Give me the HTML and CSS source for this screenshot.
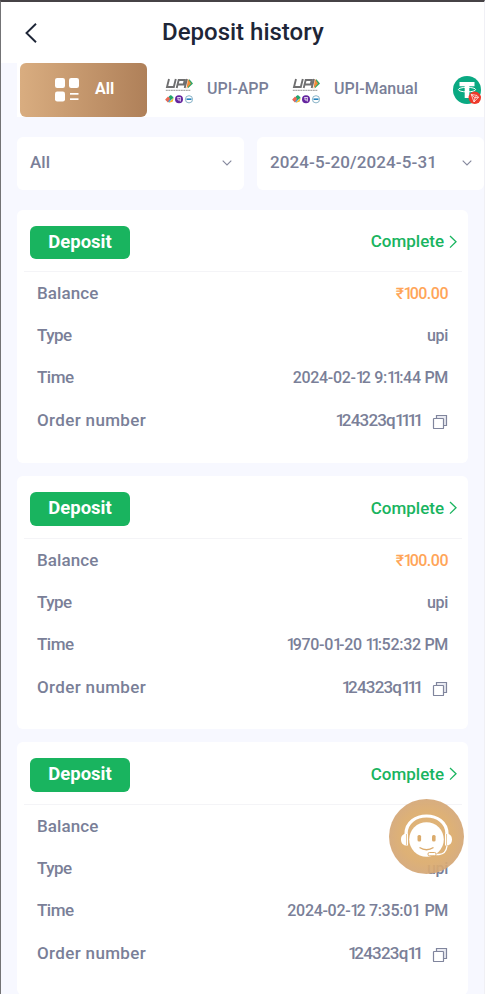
FILE: index.html
```html
<!DOCTYPE html>
<html lang="en">
<head>
<meta charset="utf-8">
<title>Deposit history</title>
<link rel="stylesheet" href="styles.css">
</head>
<body>
<svg class="defs" width="0" height="0">
  <symbol id="upi" viewBox="0 0 28 28">
    <g fill="none" stroke="#6f6f70" stroke-width="1.9">
      <path d="M4 3 2 11H8.800L10.800 3M11.700 12 13.700 4H19.700L18.700 8.500H13.200M22 3 19.700 12"/>
    </g>
    <path d="M24.200 3 28 7.500 22.700 12.500Z" fill="#31a768"/>
    <path d="M23 3 26 7.500 21.500 12.500Z" fill="#f18a38"/>
    <path d="M.8 14.300H25.500" stroke="#aaa" stroke-width="1.200" stroke-dasharray="2 .5"/>
    <g transform="translate(0 2)">
      <path d="M.5 22 5 17.500 8.500 19 4 24.500Z" fill="#369fe5"/>
      <path d="M4 18.500 6 17 8.700 20 5 22Z" fill="#25a765"/>
      <path d="M.2 21.500 3 18.500 5 20.500 2.800 24.500Z" fill="#ef6950"/>
      <path d="M3.500 25 8.600 20 7.800 23.500Z" fill="#f6b820"/>
      <circle cx="14" cy="21.300" r="4" fill="#65259f"/>
      <path d="M12.200 19.500h3.500M13 20v2h2.400M15.300 19.500v4" stroke="#fff" stroke-width=".8" fill="none"/>
      <circle cx="24" cy="21.300" r="3.600" fill="#fff" stroke="#6ba0b9" stroke-width=".8"/>
      <path d="M21.500 21.200h5" stroke="#2482bd" stroke-width="1.600"/>
    </g>
  </symbol>
  <symbol id="copy" viewBox="0 0 16 16">
    <path d="M4.500 4V1.500H14.500V11.500H12" fill="#e9eaf1" stroke="#80859d" stroke-width="1.200"/>
    <rect x="1.500" y="4.500" width="10" height="10" rx=".6" fill="#fff" stroke="#80859d" stroke-width="1.200"/>
  </symbol>
  <symbol id="down" viewBox="0 0 10 6"><path d="M.7.7 5 5 9.300.7" fill="none" stroke="#85889d" stroke-width="1.100"/></symbol>
  <symbol id="next" viewBox="0 0 8 14"><path d="M1 1 7 6.800 1 12.600" fill="none" stroke="#19b45f" stroke-width="1.300"/></symbol>
</svg>
<div class="page">
  <header class="header">
    <svg class="back" viewBox="0 0 12 20"><path d="M11 .8 1.500 10 11 19.200" fill="none" stroke="#1e2637" stroke-width="1.900"/></svg>
    <h1>Deposit history</h1>
  </header>
  <nav class="tabs">
    <div class="tab active">
      <svg class="grid" viewBox="0 0 24 24"><g fill="#fff"><rect width="10" height="10" rx="2.200"/><rect x="14" width="10" height="10" rx="2.200"/><rect y="13.500" width="10" height="10" rx="2.200"/><rect x="15" y="15" width="8.500" height="1.700"/><rect x="15" y="20.300" width="8.500" height="1.700"/></g></svg>
      <span>All</span>
    </div>
    <div class="tab app"><svg class="upi"><use href="#upi"/></svg><span>UPI-APP</span></div>
    <div class="tab manual"><svg class="upi"><use href="#upi"/></svg><span>UPI-Manual</span></div>
    <div class="tab coin">
      <svg viewBox="0 0 28 28"><circle cx="14" cy="14" r="14" fill="#0aa982"/><path d="M6.500 6H21.500V10.300H16.300V22H11.700V10.300H6.500Z" fill="#fff"/><ellipse cx="14" cy="13.600" rx="8.600" ry="2.300" fill="none" stroke="#fff" stroke-width="1"/><circle cx="21.800" cy="21.800" r="6.200" fill="#ee3a2b"/><path d="M18.200 18.400 23.600 19.400 25.600 21.200 21 26ZM18.200 18.400 22 21.800 25.600 21.200M22 21.800 21 26M22 21.800 23.600 19.400" fill="none" stroke="#fff" stroke-width=".7"/></svg>
    </div>
  </nav>
  <div class="filters">
    <div class="filter"><span>All</span><svg class="down"><use href="#down"/></svg></div>
    <div class="filter date"><span>2024-5-20/2024-5-31</span><svg class="down"><use href="#down"/></svg></div>
  </div>
  <main class="list">
    <section class="card">
      <div class="top"><b class="badge">Deposit</b><span class="status">Complete</span><svg class="next"><use href="#next"/></svg></div>
      <div class="row"><span class="label">Balance</span><span class="amount">₹<i>1</i>00.00</span></div>
      <div class="row"><span class="label short">Type</span><span class="value">upi</span></div>
      <div class="row"><span class="label short">Time</span><span class="value">2024-02-<i>1</i>2 9:<i>11</i>:44 PM</span></div>
      <div class="row"><span class="label long">Order number</span><span class="order"><i>1</i>24323q<i>1111</i></span><svg class="copy"><use href="#copy"/></svg></div>
    </section>
    <section class="card">
      <div class="top"><b class="badge">Deposit</b><span class="status">Complete</span><svg class="next"><use href="#next"/></svg></div>
      <div class="row"><span class="label">Balance</span><span class="amount">₹<i>1</i>00.00</span></div>
      <div class="row"><span class="label short">Type</span><span class="value">upi</span></div>
      <div class="row"><span class="label short">Time</span><span class="value"><i>1</i>970-0<i>1</i>-20 <i>11</i>:52:32 PM</span></div>
      <div class="row"><span class="label long">Order number</span><span class="order"><i>1</i>24323q<i>111</i></span><svg class="copy"><use href="#copy"/></svg></div>
    </section>
    <section class="card">
      <div class="top"><b class="badge">Deposit</b><span class="status">Complete</span><svg class="next"><use href="#next"/></svg></div>
      <div class="row"><span class="label">Balance</span></div>
      <div class="row"><span class="label short">Type</span><span class="value">upi</span></div>
      <div class="row"><span class="label short">Time</span><span class="value">2024-02-<i>1</i>2 7:35:01 PM</span></div>
      <div class="row"><span class="label long">Order number</span><span class="order"><i>1</i>24323q<i>11</i></span><svg class="copy"><use href="#copy"/></svg></div>
    </section>
  </main>
  <svg class="support" viewBox="0 0 75 75">
    <defs><radialGradient id="gold"><stop offset="0" stop-color="#dfb06f"/><stop offset=".7" stop-color="#dbab6c"/><stop offset="1" stop-color="#d4a777"/></radialGradient></defs>
    <circle cx="37.500" cy="37.500" r="37.500" fill="url(#gold)" opacity=".93"/>
    <path d="M17 35C17 11 58 11 58 35" fill="none" stroke="#fff" stroke-width="3.200"/>
    <circle cx="37.500" cy="40.500" r="17.300" fill="#fff"/>
    <path d="M19 34.500V46.500C14.500 47 12 44.500 12 40.500S14.500 34 19 34.500ZM56 34.500V46.500C60.500 47 63 44.500 63 40.500S60.500 34 56 34.500Z" fill="#fff"/>
    <path d="M17.500 35V46M57.500 35V46" stroke="#dfb375" stroke-width=".7"/>
    <rect x="28.500" y="36" width="3.600" height="6.500" rx="1.500" fill="#dbab6c"/><rect x="43" y="36" width="3.600" height="6.500" rx="1.500" fill="#dbab6c"/>
    <path d="M30.500 48.500Q37.500 53 44.500 48.500" fill="none" stroke="#dbab6c" stroke-width="1.400"/>
    <path d="M58 47Q57 55 50 55.500H46" fill="none" stroke="#fff" stroke-width="1.300"/>
    <rect x="39" y="53.500" width="8" height="3.300" rx="1.400" fill="#fff" stroke="#dbab6c" stroke-width="1"/>
  </svg>
</div>
</body>
</html>
```

FILE: styles.css
```css
* { box-sizing: border-box; }
body { margin: 0; overflow: hidden; background: #f7f8ff; }
.defs { position: absolute; }
.page {
  position: relative;
  height: 994px;
  overflow: hidden;
  border-top: 2px solid #464346;
  border-left: 1px solid #737375;
  border-right: 1px solid #f0f0f5;
  background: #f7f8ff;
  color: #7a7f98;
  font: 500 17px/24px Roboto, "Liberation Sans", sans-serif;
  white-space: nowrap;
}
/* narrow figure one */
i { font-style: normal; letter-spacing: -3px; }
.header { display: flex; align-items: center; height: 61px; padding-left: 24px; background: #fff; }
.back { width: 12px; height: 20px; }
h1 { margin: 0 0 2px 125px; color: #1e2637; font-size: 24px; font-weight: 500; letter-spacing: 0; }
.tabs { display: flex; height: 54px; margin-left: 16px; padding-left: 3px; background: #fff; }
.tab { display: flex; align-items: center; font-size: 16px; }
.tab span { margin-bottom: 2px; }
.tab.active { width: 127px; padding-left: 35px; gap: 16px; border-radius: 6px; background: linear-gradient(90deg, #d9ad80, #af8059); color: #fff; font-weight: 700; }
.grid { width: 24px; height: 24px; }
.app { width: 127px; padding-left: 18px; gap: 14px; }
.manual { width: 161px; padding-left: 18px; gap: 14px; }
.upi { width: 28px; height: 28px; }
.coin svg { width: 28px; height: 28px; margin-left: 18px; }
.filters { display: flex; gap: 13px; margin: 20px 0 0 16px; }
.filter { display: flex; align-items: center; justify-content: space-between; flex: none; width: 227px; height: 53px; padding: 0 12px 2px 13px; border-radius: 6px; background: #fff; }
.filter span { margin-bottom: 2px; letter-spacing: .1px; }
.down { width: 10px; height: 6px; }
.list { display: flex; flex-direction: column; gap: 13px; margin: 20px 16px 0; }
.card { flex: none; height: 253px; border-radius: 6px; background: #fff; }
.top { display: flex; align-items: center; height: 62px; margin: 0 6px 1px 7px; padding: 4px 5px 0 6px; border-bottom: 1px solid #f4f4f7; }
.card + .card .top { height: 63px; }
.badge { width: 100px; height: 33.5px; border-radius: 6px; background: #19b45f; color: #fff; font-size: 18.5px; line-height: 32px; text-align: center; }
.status { margin: 0 0 3px auto; color: #19b45f; }
.next { width: 8px; height: 14px; margin: 0 0 2px 5px; }
.row { display: flex; align-items: center; height: 42.2px; padding: 0 20px; }
.label { margin-bottom: 2px; letter-spacing: .1px; }
.label.short { letter-spacing: -.5px; }
.label.long { letter-spacing: .35px; }
.value, .amount { margin-left: auto; font-size: 16px; letter-spacing: -.3px; }
.amount { color: #ffa558; letter-spacing: -.5px; }
.order { margin: 0 -2px 2px auto; letter-spacing: -.8px; }
.order i { letter-spacing: -3.4px; }
.copy { width: 16px; height: 16px; margin: 2px 0 0 14px; }
.support { position: absolute; left: 388px; top: 797px; width: 75px; height: 75px; }
```
